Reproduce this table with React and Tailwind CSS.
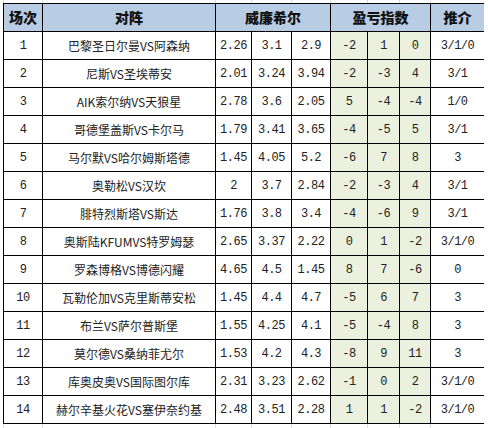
import React from "react";

const rows = [
  ["1", "巴黎圣日尔曼VS阿森纳", "2.26", "3.1", "2.9", "-2", "1", "0", "3/1/0"],
  ["2", "尼斯VS圣埃蒂安", "2.01", "3.24", "3.94", "-2", "-3", "4", "3/1"],
  ["3", "AIK索尔纳VS天狼星", "2.78", "3.6", "2.05", "5", "-4", "-4", "1/0"],
  ["4", "哥德堡盖斯VS卡尔马", "1.79", "3.41", "3.65", "-4", "-5", "5", "3/1"],
  ["5", "马尔默VS哈尔姆斯塔德", "1.45", "4.05", "5.2", "-6", "7", "8", "3"],
  ["6", "奥勒松VS汉坎", "2", "3.7", "2.84", "-2", "-3", "4", "3/1"],
  ["7", "腓特烈斯塔VS斯达", "1.76", "3.8", "3.4", "-4", "-6", "9", "3/1"],
  ["8", "奥斯陆KFUMVS特罗姆瑟", "2.65", "3.37", "2.22", "0", "1", "-2", "3/1/0"],
  ["9", "罗森博格VS博德闪耀", "4.65", "4.5", "1.45", "8", "7", "-6", "0"],
  ["10", "瓦勒伦加VS克里斯蒂安松", "1.45", "4.4", "4.7", "-5", "6", "7", "3"],
  ["11", "布兰VS萨尔普斯堡", "1.55", "4.25", "4.1", "-5", "-4", "8", "3"],
  ["12", "莫尔德VS桑纳菲尤尔", "1.53", "4.2", "4.3", "-8", "9", "11", "3"],
  ["13", "库奥皮奥VS国际图尔库", "2.31", "3.23", "2.62", "-1", "0", "2", "3/1/0"],
  ["14", "赫尔辛基火花VS塞伊奈约基", "2.48", "3.51", "2.28", "1", "1", "-2", "3/1/0"],
];

const cols = "grid-cols-[38px_172px_35px_39px_38px_36px_31px_30px_53px]";

// faint excel gridlines above / below the table
const GridStrip = ({ h }) => (
  <div className={`grid ${cols} gap-x-px bg-[#dcdcdc] border-x border-[#dcdcdc] ${h}`}>
    {Array.from({ length: 9 }).map((_, i) => (
      <div key={i} className="bg-white" />
    ))}
  </div>
);

const Head = ({ children, span }) => (
  <div
    className={`bg-[#b8cce4] h-[27px] flex items-center justify-center text-[14px] font-black text-[#111] ${span || ""}`}
  >
    {children}
  </div>
);

const Cell = ({ children, green, cjk }) => (
  <div
    className={`h-[27px] flex items-center justify-center text-[#222] ${
      green ? "bg-[#ebf1de]" : "bg-white"
    } ${cjk ? "text-[12px]" : "text-[12px] font-['Liberation_Mono',monospace] tracking-[-0.5px]"}`}
  >
    {children}
  </div>
);

export default function App() {
  return (
    <div className="w-[488px] h-[428px] bg-white overflow-hidden font-['Noto_Sans_CJK_SC','Noto_Sans',sans-serif]">
      <div className="ml-[3px] w-[481px]">
        <GridStrip h="h-[3px]" />
        <div className={`grid ${cols} gap-px bg-black border border-black`}>
          <Head>场次</Head>
          <Head>对阵</Head>
          <Head span="col-span-3">威廉希尔</Head>
          <Head span="col-span-3">盈亏指数</Head>
          <Head>推介</Head>
          {rows.map((r) => (
            <React.Fragment key={r[0]}>
              <Cell>{r[0]}</Cell>
              <Cell cjk>{r[1]}</Cell>
              <Cell>{r[2]}</Cell>
              <Cell>{r[3]}</Cell>
              <Cell>{r[4]}</Cell>
              <Cell green>{r[5]}</Cell>
              <Cell green>{r[6]}</Cell>
              <Cell green>{r[7]}</Cell>
              <Cell>{r[8]}</Cell>
            </React.Fragment>
          ))}
        </div>
        <GridStrip h="h-[6px]" />
      </div>
    </div>
  );
}
